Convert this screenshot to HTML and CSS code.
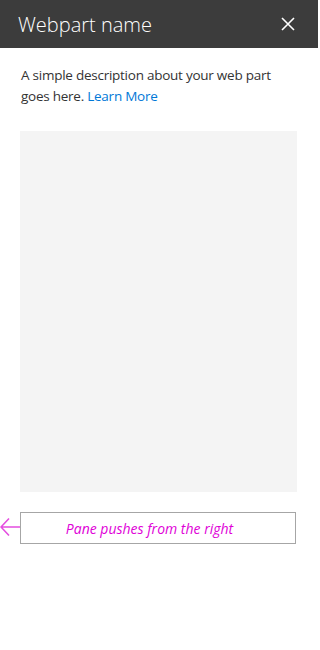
FILE: index.html
```html
<!DOCTYPE html>
<html>
<head>
<meta charset="utf-8">
<link rel="stylesheet" href="styles.css">
</head>
<body>
<div class="pane">
  <header class="pane-header">
    <h1 class="pane-title">Webpart name</h1>
    <button class="close-btn" aria-label="Close">
      <svg width="14" height="14" viewBox="0 0 14 14"><path d="M1 1 L13 13 M13 1 L1 13" stroke="#fff" stroke-width="1.6" fill="none"/></svg>
    </button>
  </header>
  <div class="pane-body">
    <p class="desc">A simple description about your web part goes here. <a class="link" href="#">Learn More</a></p>
    <div class="placeholder"></div>
    <div class="note-row">
      <svg class="arrow" width="20" height="20" viewBox="0 0 20 20"><path d="M20 10 H1 M9 1.5 L1 10 L9 18.5" stroke="#e44ee0" stroke-width="1.6" fill="none"/></svg>
      <div class="note">Pane pushes from the right</div>
    </div>
  </div>
</div>
</body>
</html>
```
FILE: styles.css
```css
html, body {
  margin: 0;
  padding: 0;
  background: #fff;
}
body {
  font-family: "Open Sans", "Noto Sans", sans-serif;
  width: 318px;
}
.pane-header {
  height: 48px;
  background: #3c3c3c;
  display: flex;
  align-items: center;
  justify-content: space-between;
  padding: 0 22px 0 18px;
}
.pane-title {
  margin: 0;
  font-size: 20px;
  font-weight: 300;
  color: #fff;
  letter-spacing: 0;
}
.close-btn {
  background: none;
  border: 0;
  padding: 0;
  width: 16px;
  height: 16px;
  display: flex;
  align-items: center;
  justify-content: center;
}
.pane-body {
  padding: 0 21px 0 20px;
}
.desc {
  margin: 17px 0 0 1px;
  font-size: 13.5px;
  line-height: 21px;
  color: #333;
  letter-spacing: -0.25px;
}
.link {
  color: #0078d7;
  text-decoration: none;
}
.placeholder {
  margin-top: 24px;
  height: 361px;
  background: #f4f4f4;
}
.note-row {
  position: relative;
  margin-top: 20px;
}
.arrow {
  position: absolute;
  left: -20px;
  top: 5px;
}
.note {
  box-sizing: border-box;
  height: 32px;
  width: 276px;
  padding-right: 17px;
  border: 1px solid #a6a6a6;
  display: flex;
  align-items: center;
  justify-content: center;
  font-style: italic;
  font-size: 14px;
  color: #e000d8;
  letter-spacing: 0;
}
```
